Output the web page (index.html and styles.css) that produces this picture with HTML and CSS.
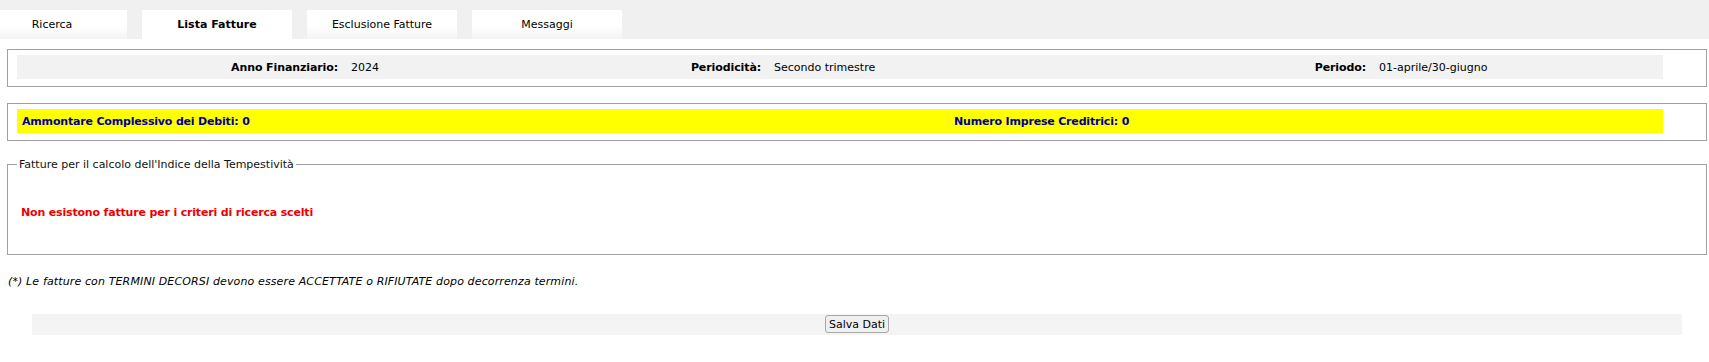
FILE: index.html
```html
<!DOCTYPE html>
<html lang="it">
  <head>
    <meta charset="utf-8" />
    <title>Lista Fatture</title>
    <link rel="stylesheet" href="styles.css">
  </head>
  <body>
    <div class="tabs">
      <div class="tab">Ricerca</div>
      <div class="tab active">Lista Fatture</div>
      <div class="tab">Esclusione Fatture</div>
      <div class="tab">Messaggi</div>
    </div>

    <div class="content">
      <div class="panel">
        <div class="info-row">
          <span class="lbl">Anno Finanziario:</span>
          <span class="val">2024</span>
          <span class="lbl">Periodicità:</span>
          <span class="val">Secondo trimestre</span>
          <span class="lbl">Periodo:</span>
          <span class="val">01-aprile/30-giugno</span>
        </div>
      </div>

      <div class="panel panel-gap">
        <div class="totals-row">
          <span>Ammontare Complessivo dei Debiti: 0</span>
          <span>Numero Imprese Creditrici: 0</span>
        </div>
      </div>

      <fieldset class="invoices">
        <legend>Fatture per il calcolo dell'Indice della Tempestività</legend>
        <div class="empty-msg">Non esistono fatture per i criteri di ricerca scelti</div>
      </fieldset>

      <p class="note">(*) Le fatture con TERMINI DECORSI devono essere ACCETTATE o RIFIUTATE dopo decorrenza termini.</p>

      <div class="actions">
        <button class="btn" type="button">Salva Dati</button>
      </div>
    </div>
  </body>
</html>
```

FILE: styles.css
```css
body {
  margin: 0;
  font-family: "DejaVu Sans", Verdana, sans-serif;
  font-size: 11px;
  color: #000;
  background: #fff;
}
.tabs {
  display: flex;
  gap: 15px;
  height: 29px;
  padding-top: 10px;
  background: #f0f0f0;
  overflow: hidden;
}
.tab {
  flex: 0 0 150px;
  line-height: 29px;
  text-align: center;
  background: linear-gradient(#ffffff 55%, #f4f4f4);
}
.tab:first-child {
  margin-left: -23px;
}
.tab.active {
  background: #fff;
  font-weight: bold;
}
.content {
  padding: 10px 2px 0 7px;
}
.panel {
  border: 1px solid #a0a0a0;
  padding: 5px 0 7px 9px;
}
.panel-gap {
  margin-top: 16px;
}
.info-row {
  display: grid;
  grid-template-columns: 329px 150px 273px 335px 270px 289px;
  width: 1646px;
  height: 24px;
  align-items: center;
  background: #f2f2f2;
}
.lbl {
  font-weight: bold;
  text-align: right;
  padding-right: 8px;
  letter-spacing: -0.1px;
}
.val {
  padding-left: 5px;
}
.totals-row {
  display: grid;
  grid-template-columns: 932px 1fr;
  width: 1646px;
  height: 24px;
  align-items: center;
  background: #ffff00;
  color: #000099;
  font-weight: bold;
  letter-spacing: -0.18px;
}
.totals-row span {
  padding-left: 5px;
}
.invoices {
  margin: 17px 0 0;
  padding: 0 9px;
  border: 1px solid #a0a0a0;
  min-inline-size: 0;
}
.invoices legend {
  padding: 0 2px;
  line-height: 13px;
  color: #111;
}
.empty-msg {
  padding: 35px 0 34px 4px;
  line-height: 14px;
  color: #ee0000;
  font-weight: bold;
  letter-spacing: -0.17px;
}
.note {
  margin: 20px 0 0 1px;
  line-height: 14px;
  font-style: italic;
  letter-spacing: 0.13px;
}
.actions {
  margin: 25px 0 0 25px;
  width: 1650px;
  padding: 1px 0 2px;
  text-align: center;
  background: #f4f4f4;
}
.btn {
  height: 18px;
  padding: 0 3px;
  font-family: "DejaVu Sans", Verdana, sans-serif;
  font-size: 11px;
  color: #000;
  background: #efefef;
  border: 1px solid #a8a8a8;
  border-radius: 3px;
}
```
